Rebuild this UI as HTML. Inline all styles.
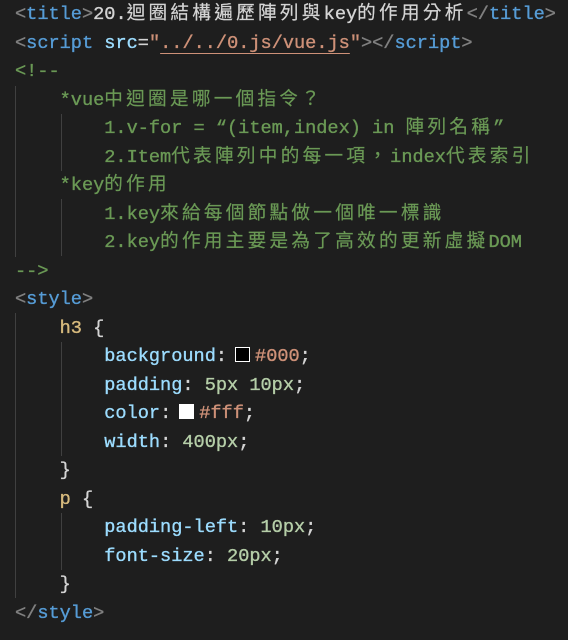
<!DOCTYPE html>
<html><head><meta charset="utf-8"><style>
body{margin:0;background:#1e1e1e;width:568px;height:640px;overflow:hidden;position:relative}
pre{margin:0;position:absolute;left:15px;top:1px;font-family:"Liberation Mono","Noto Sans CJK TC",monospace;font-size:18.6px;font-weight:normal;-webkit-text-stroke:0.35px currentColor;line-height:28.5px;color:#d4d4d4}
.c{letter-spacing:3.3px;-webkit-text-stroke:0.2px currentColor}
.g{color:#808080}.t{color:#569cd6}.a{color:#9cdcfe}.s{color:#ce9178}.m{color:#6a9955}.n{color:#b5cea8}.sel{color:#d7ba7d}
.u{text-decoration:underline;text-decoration-color:#ce9178;text-underline-offset:5px}
.gl{position:absolute;width:1px;background:#404040}
.sw{display:inline-block;width:13px;height:13px;border:1px solid #fff;margin:0 5px 0 8px;vertical-align:-1px;-webkit-text-stroke:0}
</style></head><body>
<div class="gl" style="left:15px;top:86px;height:171px"></div>
<div class="gl" style="left:61px;top:114px;height:57px"></div>
<div class="gl" style="left:61px;top:199px;height:57px"></div>
<div class="gl" style="left:15px;top:313px;height:285px"></div>
<div class="gl" style="left:61px;top:342px;height:114px"></div>
<div class="gl" style="left:61px;top:513px;height:57px"></div>
<pre><span class="g">&lt;</span><span class="t">title</span><span class="g">&gt;</span>20.<span class="c">迴圈結構遍歷陣列與</span>key<span class="c">的作用分析</span><span class="g">&lt;/</span><span class="t">title</span><span class="g">&gt;</span>
<span class="g">&lt;</span><span class="t">script</span> <span class="a">src</span>=<span class="s">"<span class="u">../../0.js/vue.js</span>"</span><span class="g">&gt;&lt;/</span><span class="t">script</span><span class="g">&gt;</span>
<span class="m">&lt;!--
    *vue<span class="c">中迴圈是哪一個指令？</span>
        1.v-for = “(item,index) in <span class="c">陣列名稱</span>”
        2.Item<span class="c">代表陣列中的每一項，</span>index<span class="c">代表索引</span>
    *key<span class="c">的作用</span>
        1.key<span class="c">來給每個節點做一個唯一標識</span>
        2.key<span class="c">的作用主要是為了高效的更新虛擬</span>DOM
--&gt;</span>
<span class="g">&lt;</span><span class="t">style</span><span class="g">&gt;</span>
    <span class="sel">h3</span> {
        <span class="a">background</span>:<span class="sw" style="background:#000"></span><span class="s">#000</span>;
        <span class="a">padding</span>: <span class="n">5px</span> <span class="n">10px</span>;
        <span class="a">color</span>:<span class="sw" style="background:#fff"></span><span class="s">#fff</span>;
        <span class="a">width</span>: <span class="n">400px</span>;
    }
    <span class="sel">p</span> {
        <span class="a">padding-left</span>: <span class="n">10px</span>;
        <span class="a">font-size</span>: <span class="n">20px</span>;
    }
<span class="g">&lt;/</span><span class="t">style</span><span class="g">&gt;</span></pre>
</body></html>
